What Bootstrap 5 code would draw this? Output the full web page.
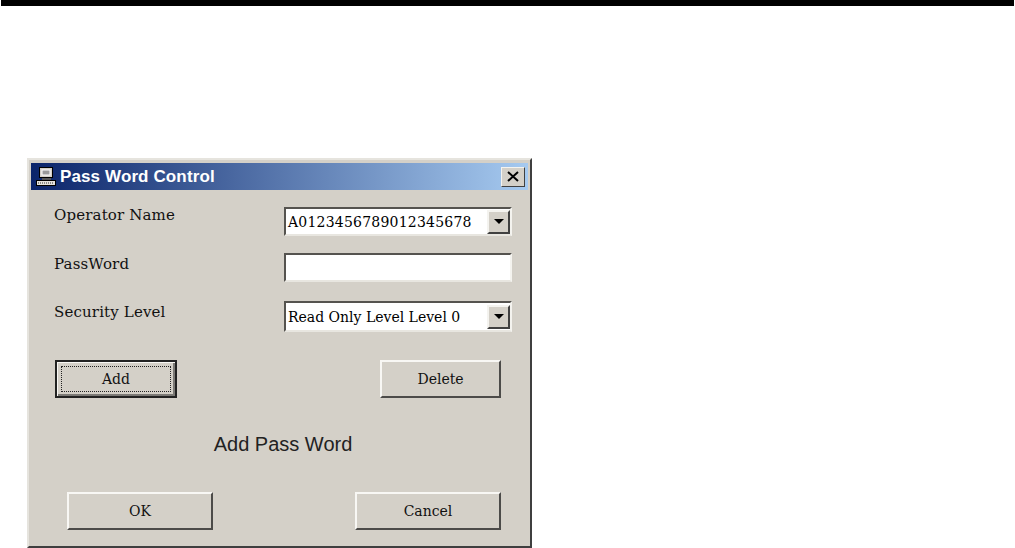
<!DOCTYPE html>
<html lang="en">
<head>
    <meta charset="UTF-8">
    <meta name="viewport" content="width=device-width, initial-scale=1">
    <title>Pass Word Control</title>
    <link href="https://cdn.jsdelivr.net/npm/bootstrap@5.3.2/dist/css/bootstrap.min.css" rel="stylesheet">
    <style>
        body { background: #fff; overflow: hidden; }
        .top-rule { height: 6px; background: #000; margin: 0 1px; }
        .dlg {
            width: 505px; height: 390px; margin: 152px 0 0 27px;
            background: #d4d0c8;
            border: 2px solid; border-color: #e6e4de #3f3f3f #3f3f3f #e6e4de;
            padding: 3px 2px 0 2px;
        }
        .dlg-title {
            height: 27px; padding: 0 3px 0 5px;
            background: linear-gradient(to right, #0a246a, #a6caf0);
            color: #fff; font: bold 17px "Liberation Sans", sans-serif;
            letter-spacing: .12px;
        }
        .dlg-close {
            width: 24px; height: 20px; padding: 0; background: #d4d0c8; border: 1px solid;
            border-color: #f4f3ef #404040 #404040 #f4f3ef;
        }
        .dlg-body { padding: 0 16px 0 23px; }
        .form-line { margin-top: 17px; height: 29px; }
        .form-line.tall { margin-top: 19px; height: 31px; }
        .lbl { font: 15px/20px "DejaVu Serif", serif; color: #111; margin-top: 1px; letter-spacing: .15px; }
        .lbl.up { margin-top: -2px; }
        .well {
            width: 228px; height: 100%; background: #fff; border: 2px solid;
            border-color: #55534f #f4f3ef #e8e6e0 #55534f;
            font: 14px "DejaVu Serif", serif; color: #000; padding-left: 2px;
        }
        .well input { border: 0; outline: 0; width: 100%; }
        .stretch { letter-spacing: .22px; }
        .drop {
            width: 23px; height: 24px; background: #d4d0c8; border: 2px solid;
            border-color: #f4f3ef #404040 #404040 #f4f3ef;
        }
        .win-btn {
            height: 38px; padding: 0; background: #d4d0c8; color: #111;
            font: 14px "DejaVu Serif", serif; border-radius: 0; border: 2px solid;
            border-color: #f8f7f4 #4c4b49 #4c4b49 #f8f7f4;
        }
        .win-btn:hover { background: #d4d0c8; color: #111; border-color: #f8f7f4 #4c4b49 #4c4b49 #f8f7f4; }
        .win-btn.main {
            width: 122px; border: 2px solid #222; outline: 1px dotted #222; outline-offset: -7px; margin-left: 1px;
            box-shadow: inset 1px 1px 0 #f8f7f4, inset -2px -2px 0 #7c7a76;
        }
        .win-btn.wide { width: 146px; }
        .win-btn.mid { width: 121px; }
        .row-a { margin-top: 28px; padding-right: 11px; }
        .row-b { margin-top: 36px; padding: 0 11px 0 13px; }
        .status { margin-top: 34px; height: 24px; font: 20px/24px "Liberation Sans", sans-serif; color: #222; text-align: center; }
    </style>
</head>

<body>
    <div class="top-rule"></div>

    <div class="dlg">
        <div class="dlg-title d-flex align-items-center">
            <svg class="me-1" width="20" height="21" viewBox="0 0 20 21">
                <rect x="3.5" y="1.5" width="13" height="10" fill="#d4d0c8" stroke="#000"/>
                <rect x="6" y="4" width="8" height="5" fill="#9a9a9a" stroke="#fff"/>
                <rect x="6" y="12" width="9" height="2" fill="#555"/>
                <rect x=".5" y="14.5" width="19" height="5" fill="#e4e2dc" stroke="#000"/>
                <path d="M2 17h16" stroke="#333" stroke-dasharray="1 1"/>
            </svg>
            <span class="flex-grow-1">Pass Word Control</span>
            <button class="dlg-close d-flex align-items-center justify-content-center" type="button" aria-label="Close">
                <svg width="12" height="11" viewBox="0 0 12 11"><path d="M1 1l10 9M11 1L1 10" stroke="#000" stroke-width="2"/></svg>
            </button>
        </div>

        <div class="dlg-body">
            <div class="form-line d-flex justify-content-between">
                <span class="lbl up">Operator Name</span>
                <div class="well d-flex align-items-center justify-content-between">
                    <span class="stretch">A0123456789012345678</span>
                    <span class="drop d-flex align-items-center justify-content-center">
                        <svg width="10" height="5" viewBox="0 0 10 5"><path d="M0 0h10L5 5z" fill="#000"/></svg>
                    </span>
                </div>
            </div>
            <div class="form-line d-flex justify-content-between">
                <span class="lbl">PassWord</span>
                <div class="well"><input type="text" aria-label="PassWord"></div>
            </div>
            <div class="form-line tall d-flex justify-content-between">
                <span class="lbl">Security Level</span>
                <div class="well d-flex align-items-center justify-content-between">
                    <span>Read Only Level Level 0</span>
                    <span class="drop d-flex align-items-center justify-content-center">
                        <svg width="10" height="5" viewBox="0 0 10 5"><path d="M0 0h10L5 5z" fill="#000"/></svg>
                    </span>
                </div>
            </div>

            <div class="row-a d-flex justify-content-between">
                <button class="btn win-btn main" type="button">Add</button>
                <button class="btn win-btn mid" type="button">Delete</button>
            </div>

            <div class="status">Add Pass Word</div>

            <div class="row-b d-flex justify-content-between">
                <button class="btn win-btn wide" type="button">OK</button>
                <button class="btn win-btn wide" type="button">Cancel</button>
            </div>
        </div>
    </div>

    <script src="https://cdn.jsdelivr.net/npm/bootstrap@5.3.2/dist/js/bootstrap.bundle.min.js"></script>
</body>
</html>
